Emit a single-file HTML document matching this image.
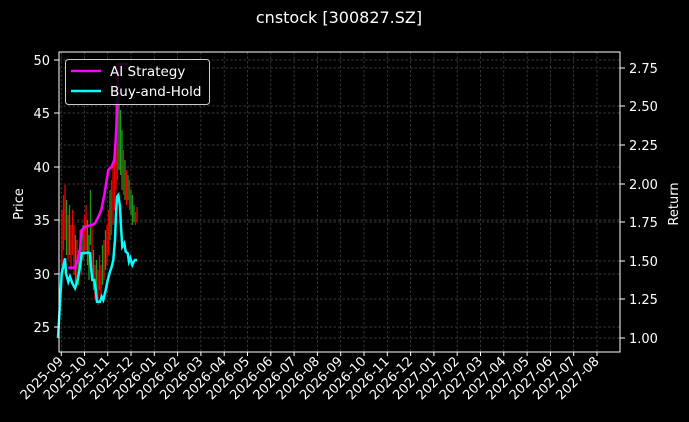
<!DOCTYPE html>
<html><head><meta charset="utf-8"><style>
html,body{margin:0;padding:0;background:#000;}
svg{display:block;font-family:"DejaVu Sans","Liberation Sans",sans-serif;}
</style></head><body>
<svg width="689" height="422" viewBox="0 0 689 422" xmlns="http://www.w3.org/2000/svg">
<rect width="689" height="422" fill="#000"/>
<text x="339" y="23" fill="#fff" font-size="16" text-anchor="middle">cnstock [300827.SZ]</text>
<g stroke="#4a4a4a" stroke-width="0.7" stroke-dasharray="2.5,2">
<line x1="59" x2="620" y1="60" y2="60"/><line x1="59" x2="620" y1="113" y2="113"/><line x1="59" x2="620" y1="167" y2="167"/><line x1="59" x2="620" y1="220" y2="220"/><line x1="59" x2="620" y1="274" y2="274"/><line x1="59" x2="620" y1="327" y2="327"/>
<line x1="59" x2="620" y1="68" y2="68"/><line x1="59" x2="620" y1="106" y2="106"/><line x1="59" x2="620" y1="145" y2="145"/><line x1="59" x2="620" y1="184" y2="184"/><line x1="59" x2="620" y1="222" y2="222"/><line x1="59" x2="620" y1="261" y2="261"/><line x1="59" x2="620" y1="299" y2="299"/><line x1="59" x2="620" y1="338" y2="338"/>
<line x1="61.3" x2="61.3" y1="52" y2="352"/><line x1="84.5" x2="84.5" y1="52" y2="352"/><line x1="107.7" x2="107.7" y1="52" y2="352"/><line x1="131" x2="131" y1="52" y2="352"/><line x1="154.3" x2="154.3" y1="52" y2="352"/><line x1="177.6" x2="177.6" y1="52" y2="352"/><line x1="200.9" x2="200.9" y1="52" y2="352"/><line x1="224.2" x2="224.2" y1="52" y2="352"/><line x1="247.5" x2="247.5" y1="52" y2="352"/><line x1="270.8" x2="270.8" y1="52" y2="352"/><line x1="294.1" x2="294.1" y1="52" y2="352"/><line x1="317.4" x2="317.4" y1="52" y2="352"/><line x1="340.7" x2="340.7" y1="52" y2="352"/><line x1="364" x2="364" y1="52" y2="352"/><line x1="387.3" x2="387.3" y1="52" y2="352"/><line x1="410.6" x2="410.6" y1="52" y2="352"/><line x1="433.9" x2="433.9" y1="52" y2="352"/><line x1="457.2" x2="457.2" y1="52" y2="352"/><line x1="480.5" x2="480.5" y1="52" y2="352"/><line x1="503.8" x2="503.8" y1="52" y2="352"/><line x1="527.1" x2="527.1" y1="52" y2="352"/><line x1="550.4" x2="550.4" y1="52" y2="352"/><line x1="573.7" x2="573.7" y1="52" y2="352"/><line x1="597" x2="597" y1="52" y2="352"/>
</g>
<g stroke-width="1.3">
<line x1="62" x2="62" y1="210" y2="270" stroke="#e00"/><line x1="63.5" x2="63.5" y1="195" y2="250" stroke="#e00"/><line x1="65" x2="65" y1="185" y2="240" stroke="#e00"/><line x1="66.5" x2="66.5" y1="200" y2="255" stroke="#1a9a1a"/><line x1="68" x2="68" y1="215" y2="260" stroke="#e00"/><line x1="69.5" x2="69.5" y1="205" y2="255" stroke="#1a9a1a"/><line x1="71" x2="71" y1="225" y2="270" stroke="#e00"/><line x1="72.5" x2="72.5" y1="210" y2="255" stroke="#e00"/><line x1="74" x2="74" y1="225" y2="275" stroke="#e00"/><line x1="75.5" x2="75.5" y1="235" y2="285" stroke="#1a9a1a"/><line x1="77" x2="77" y1="240" y2="280" stroke="#e00"/><line x1="78.5" x2="78.5" y1="250" y2="285" stroke="#1a9a1a"/><line x1="80" x2="80" y1="230" y2="270" stroke="#e00"/><line x1="81.5" x2="81.5" y1="245" y2="275" stroke="#e00"/><line x1="83" x2="83" y1="225" y2="260" stroke="#1a9a1a"/><line x1="84.5" x2="84.5" y1="215" y2="255" stroke="#e00"/><line x1="86" x2="86" y1="205" y2="250" stroke="#e00"/><line x1="87.5" x2="87.5" y1="220" y2="265" stroke="#1a9a1a"/><line x1="89" x2="89" y1="235" y2="280" stroke="#1a9a1a"/><line x1="90.5" x2="90.5" y1="190" y2="245" stroke="#1a9a1a"/><line x1="92" x2="92" y1="225" y2="275" stroke="#e00"/><line x1="93.5" x2="93.5" y1="250" y2="290" stroke="#1a9a1a"/><line x1="95" x2="95" y1="265" y2="300" stroke="#e00"/><line x1="96.5" x2="96.5" y1="260" y2="295" stroke="#1a9a1a"/><line x1="98" x2="98" y1="270" y2="305" stroke="#e00"/><line x1="99.5" x2="99.5" y1="255" y2="290" stroke="#e00"/><line x1="101" x2="101" y1="265" y2="300" stroke="#e00"/><line x1="102.5" x2="102.5" y1="245" y2="285" stroke="#1a9a1a"/><line x1="104" x2="104" y1="240" y2="280" stroke="#e00"/><line x1="105.5" x2="105.5" y1="230" y2="270" stroke="#1a9a1a"/><line x1="107" x2="107" y1="225" y2="265" stroke="#e00"/><line x1="108.5" x2="108.5" y1="210" y2="255" stroke="#e00"/><line x1="110" x2="110" y1="190" y2="240" stroke="#1a9a1a"/><line x1="111.5" x2="111.5" y1="180" y2="235" stroke="#e00"/><line x1="113" x2="113" y1="165" y2="225" stroke="#e00"/><line x1="114.5" x2="114.5" y1="150" y2="210" stroke="#e00"/><line x1="116" x2="116" y1="100" y2="190" stroke="#e00"/><line x1="117.5" x2="117.5" y1="75" y2="180" stroke="#e00"/><line x1="119" x2="119" y1="90" y2="170" stroke="#1a9a1a"/><line x1="120.5" x2="120.5" y1="110" y2="175" stroke="#1a9a1a"/><line x1="122" x2="122" y1="130" y2="190" stroke="#1a9a1a"/><line x1="123.5" x2="123.5" y1="150" y2="195" stroke="#e00"/><line x1="125" x2="125" y1="160" y2="200" stroke="#1a9a1a"/><line x1="126.5" x2="126.5" y1="170" y2="205" stroke="#e00"/><line x1="128" x2="128" y1="175" y2="200" stroke="#1a9a1a"/><line x1="129.5" x2="129.5" y1="180" y2="210" stroke="#e00"/><line x1="131" x2="131" y1="190" y2="215" stroke="#1a9a1a"/><line x1="132.5" x2="132.5" y1="195" y2="225" stroke="#1a9a1a"/><line x1="134" x2="134" y1="205" y2="222" stroke="#1a9a1a"/><line x1="135.5" x2="135.5" y1="212" y2="225" stroke="#e00"/><line x1="137" x2="137" y1="207" y2="222" stroke="#e00"/>
</g>
<polyline fill="none" stroke="#ff00ff" stroke-width="2.5" points="68.3,267.7 75,267.7 77.7,260 80,250 81.7,230 85,226.7 91.7,225 95,223.3 96.7,220 100,213.3 101.7,208.3 104.3,195 106.7,180 108.3,170 111.7,166.7 114.3,160 115.7,140 117,113 117.5,90 118,64 128,64"/>
<polyline fill="none" stroke="#00ffff" stroke-width="2.5" points="58,338 61.7,273.3 63.3,266.7 65,258.3 66,273.3 68.3,281.7 70,276.7 72.3,283.3 75,288.3 76.7,283.3 78.3,276.7 80,266.7 81.7,253.3 88.3,252.7 90,253.3 91,266.7 92.3,280 94.3,280 95.7,290 97,301.7 100,301.7 101.7,296.7 103.3,300 105.7,290 107.7,280 110,271.7 111.7,266.7 113.3,260 115,240 116,213.3 117,196.7 118.3,195 120,206.7 121,226.7 122.3,246.7 124.3,243.3 125.7,251.7 127.7,253.3 129,261.7 130.3,258.3 132.3,265 133.7,261.7 135,260 137,260"/>
<rect x="59" y="52" width="561" height="300" fill="none" stroke="#fff" stroke-width="1"/>
<g stroke="#fff" stroke-width="1">
<line x1="54" x2="59" y1="60" y2="60"/><line x1="54" x2="59" y1="113" y2="113"/><line x1="54" x2="59" y1="167" y2="167"/><line x1="54" x2="59" y1="220" y2="220"/><line x1="54" x2="59" y1="274" y2="274"/><line x1="54" x2="59" y1="327" y2="327"/>
<line x1="620" x2="625" y1="68" y2="68"/><line x1="620" x2="625" y1="106" y2="106"/><line x1="620" x2="625" y1="145" y2="145"/><line x1="620" x2="625" y1="184" y2="184"/><line x1="620" x2="625" y1="222" y2="222"/><line x1="620" x2="625" y1="261" y2="261"/><line x1="620" x2="625" y1="299" y2="299"/><line x1="620" x2="625" y1="338" y2="338"/>
</g>
<g fill="#fff" font-size="13" text-anchor="end">
<text x="50" y="65">50</text><text x="50" y="118">45</text><text x="50" y="172">40</text><text x="50" y="225">35</text><text x="50" y="279">30</text><text x="50" y="332">25</text>
</g>
<g fill="#fff" font-size="13">
<text x="629" y="73">2.75</text><text x="629" y="111">2.50</text><text x="629" y="150">2.25</text><text x="629" y="189">2.00</text><text x="629" y="227">1.75</text><text x="629" y="266">1.50</text><text x="629" y="304">1.25</text><text x="629" y="343">1.00</text>
</g>
<text transform="translate(23,204) rotate(-90)" fill="#fff" font-size="13" text-anchor="middle">Price</text>
<text transform="translate(678,204) rotate(-90)" fill="#fff" font-size="13" text-anchor="middle">Return</text>
<g fill="#fff" font-size="13" text-anchor="end">
<text transform="translate(64,362) rotate(-45)">2025-09</text><text transform="translate(87.2,362) rotate(-45)">2025-10</text><text transform="translate(110.4,362) rotate(-45)">2025-11</text><text transform="translate(133.7,362) rotate(-45)">2025-12</text><text transform="translate(157,362) rotate(-45)">2026-01</text><text transform="translate(180.3,362) rotate(-45)">2026-02</text><text transform="translate(203.6,362) rotate(-45)">2026-03</text><text transform="translate(226.9,362) rotate(-45)">2026-04</text><text transform="translate(250.2,362) rotate(-45)">2026-05</text><text transform="translate(273.5,362) rotate(-45)">2026-06</text><text transform="translate(296.8,362) rotate(-45)">2026-07</text><text transform="translate(320.1,362) rotate(-45)">2026-08</text><text transform="translate(343.4,362) rotate(-45)">2026-09</text><text transform="translate(366.7,362) rotate(-45)">2026-10</text><text transform="translate(390,362) rotate(-45)">2026-11</text><text transform="translate(413.3,362) rotate(-45)">2026-12</text><text transform="translate(436.6,362) rotate(-45)">2027-01</text><text transform="translate(459.9,362) rotate(-45)">2027-02</text><text transform="translate(483.2,362) rotate(-45)">2027-03</text><text transform="translate(506.5,362) rotate(-45)">2027-04</text><text transform="translate(529.8,362) rotate(-45)">2027-05</text><text transform="translate(553.1,362) rotate(-45)">2027-06</text><text transform="translate(576.4,362) rotate(-45)">2027-07</text><text transform="translate(599.7,362) rotate(-45)">2027-08</text>
</g>
<g stroke="#fff" stroke-width="1">
<line x1="61.3" x2="61.3" y1="352" y2="356"/><line x1="84.5" x2="84.5" y1="352" y2="356"/><line x1="107.7" x2="107.7" y1="352" y2="356"/><line x1="131" x2="131" y1="352" y2="356"/><line x1="154.3" x2="154.3" y1="352" y2="356"/><line x1="177.6" x2="177.6" y1="352" y2="356"/><line x1="200.9" x2="200.9" y1="352" y2="356"/><line x1="224.2" x2="224.2" y1="352" y2="356"/><line x1="247.5" x2="247.5" y1="352" y2="356"/><line x1="270.8" x2="270.8" y1="352" y2="356"/><line x1="294.1" x2="294.1" y1="352" y2="356"/><line x1="317.4" x2="317.4" y1="352" y2="356"/><line x1="340.7" x2="340.7" y1="352" y2="356"/><line x1="364" x2="364" y1="352" y2="356"/><line x1="387.3" x2="387.3" y1="352" y2="356"/><line x1="410.6" x2="410.6" y1="352" y2="356"/><line x1="433.9" x2="433.9" y1="352" y2="356"/><line x1="457.2" x2="457.2" y1="352" y2="356"/><line x1="480.5" x2="480.5" y1="352" y2="356"/><line x1="503.8" x2="503.8" y1="352" y2="356"/><line x1="527.1" x2="527.1" y1="352" y2="356"/><line x1="550.4" x2="550.4" y1="352" y2="356"/><line x1="573.7" x2="573.7" y1="352" y2="356"/><line x1="597" x2="597" y1="352" y2="356"/>
</g>
<rect x="65.5" y="59.5" width="144" height="45" rx="3" fill="#000" fill-opacity="0.85" stroke="#ccc" stroke-width="1"/>
<line x1="71" x2="101" y1="71" y2="71" stroke="#ff00ff" stroke-width="2.5"/>
<line x1="71" x2="101" y1="91" y2="91" stroke="#00ffff" stroke-width="2.5"/>
<text x="110" y="76" fill="#fff" font-size="13.5">AI Strategy</text>
<text x="110" y="96" fill="#fff" font-size="13.5">Buy-and-Hold</text>
</svg>
</body></html>
